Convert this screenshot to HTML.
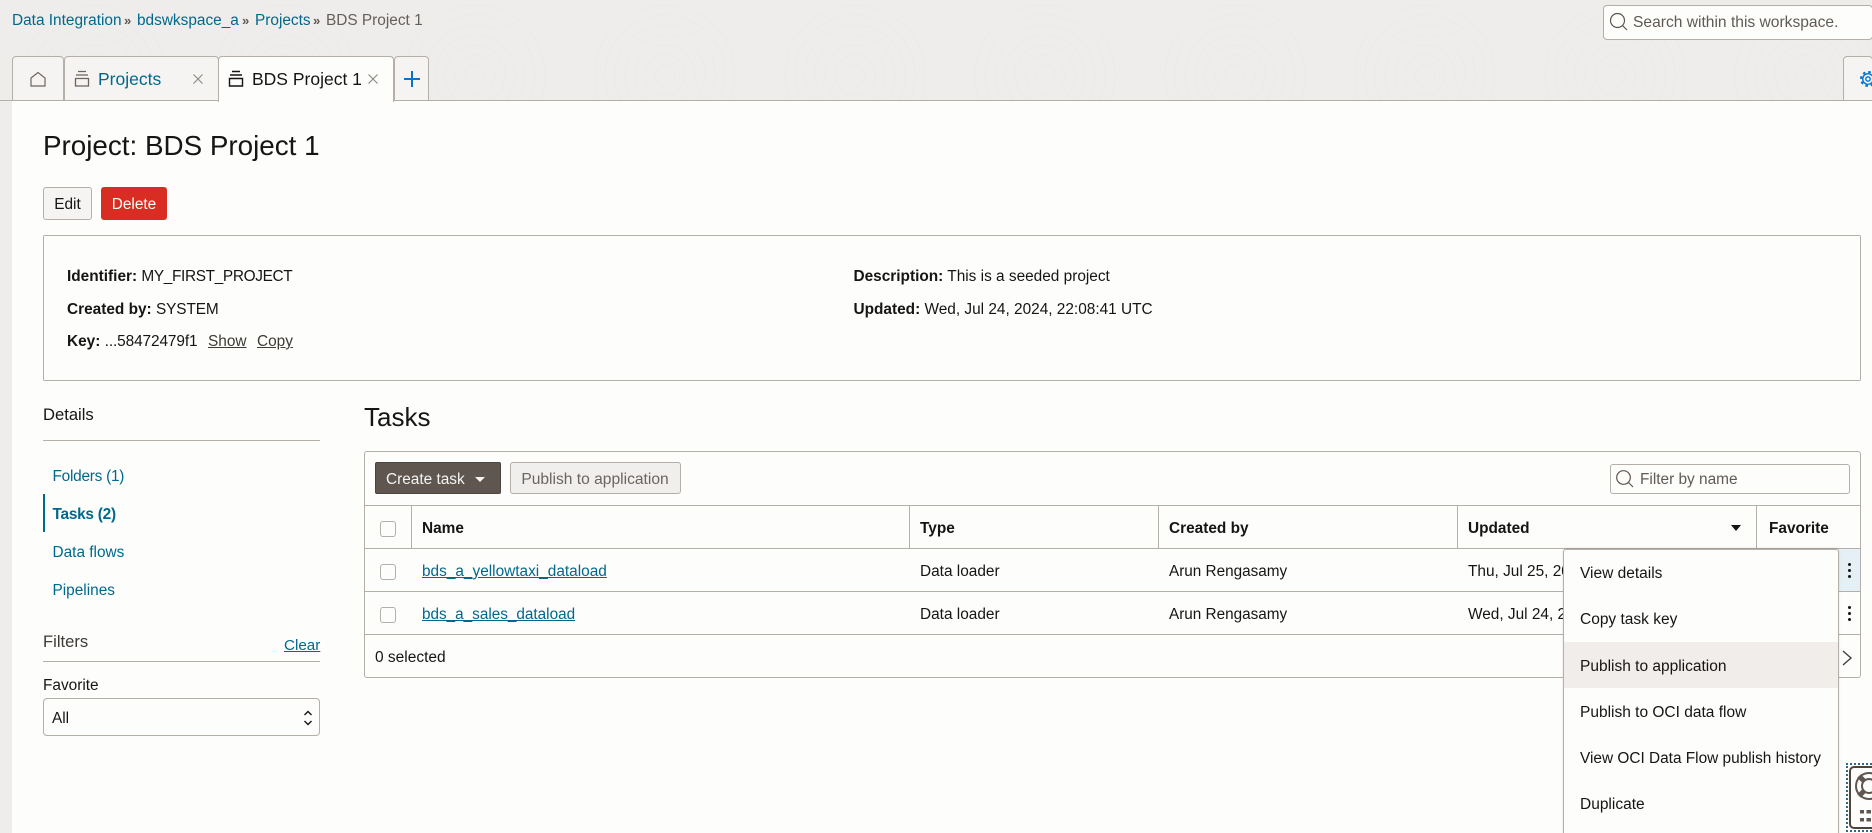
<!DOCTYPE html>
<html><head><meta charset="utf-8">
<style>
*{box-sizing:border-box}
html,body{margin:0;padding:0;width:1872px;height:833px;overflow:hidden;background:#eeedeb}
#p{position:relative;width:1872px;height:833px;overflow:hidden;background:#eeedeb;font-family:"Liberation Sans",Arial,sans-serif;font-size:15.4px;color:#161513}
.a{position:absolute;white-space:nowrap}
.t{position:absolute;white-space:nowrap;line-height:20px;height:20px;margin-top:1px}
.l{color:#00688c}
.b{font-weight:bold}
.box{position:absolute;border:1px solid #b5afa9}
.hl{position:absolute;background:#b5afa9}
.tab{position:absolute;top:56px;height:45px;background:#f5f4f2;border:1px solid #b5afa9;border-radius:4px 4px 0 0}
.cb{position:absolute;left:380px;width:16px;height:16px;border:1px solid #b5afa9;border-radius:3px;background:#fdfdfb}
.mi{position:absolute;left:1580px;line-height:20px;white-space:nowrap;color:#161513;margin-top:1px;font-size:15.5px}
.dot{position:absolute;width:3px;height:3px;border-radius:50%;background:#161513;left:1847.5px}
.sep{font-size:13px;font-weight:bold;color:#5f5650}
</style></head><body><div id="p">
<svg class="a" style="left:0;top:0" width="1872" height="833" fill="none">
<defs><pattern id="w" width="190" height="150" patternUnits="userSpaceOnUse">
<g stroke="#ebeae8" stroke-width="1"><circle cx="95" cy="75" r="10"/><circle cx="95" cy="75" r="20"/><circle cx="95" cy="75" r="30"/><circle cx="95" cy="75" r="40"/><circle cx="95" cy="75" r="50"/><circle cx="95" cy="75" r="60"/><circle cx="95" cy="75" r="70"/></g>
</pattern></defs>
<rect width="1872" height="833" fill="url(#w)"/></svg>

<div class="a" style="left:12px;top:101px;width:1860px;height:732px;background:#fdfdfb"></div>

<!-- breadcrumb -->
<div class="t l" style="left:12px;top:10px">Data Integration</div>
<div class="t sep" style="left:124px;top:10px">»</div>
<div class="t l" style="left:137px;top:10px">bdswkspace_a</div>
<div class="t sep" style="left:242px;top:10px">»</div>
<div class="t l" style="left:255px;top:10px">Projects</div>
<div class="t sep" style="left:313px;top:10px">»</div>
<div class="t" style="left:326px;top:10px;color:#655f5a">BDS Project 1</div>

<!-- search -->
<div class="a" style="left:1603px;top:5px;width:270px;height:35px;background:#fdfdfb;border:1px solid #b5afa9;border-radius:4px"></div>
<svg class="a" style="left:1609px;top:12px" width="20" height="20" fill="none" stroke="#5f5650" stroke-width="1.2"><circle cx="8.5" cy="8.5" r="7"/><path d="M13.5 13.5L18 18"/></svg>
<div class="t" style="left:1633px;top:12px;color:#5f5a55;font-size:15.6px">Search within this workspace.</div>

<!-- tabs -->
<div class="hl" style="left:0;top:100px;width:1872px;height:1px"></div>
<div class="tab" style="left:12px;width:52px"></div>
<svg class="a" style="left:29px;top:70px" width="18" height="18" fill="none" stroke="#6b6560" stroke-width="1.2"><path d="M2 8L9 2.5L16 8V16H2Z"/></svg>
<div class="tab" style="left:64px;width:155px"></div>
<svg class="a" style="left:73px;top:70px" width="18" height="18" fill="none" stroke="#6b6560" stroke-width="1.3"><path d="M5 1.5H13M3 5H15M2.5 8.5H15.5V16H2.5Z"/></svg>
<div class="t l" style="left:98px;top:68px;font-size:17.5px">Projects</div>
<svg class="a" style="left:192px;top:73px" width="12" height="12" stroke="#8c8680" stroke-width="1.1"><path d="M1.5 1.5L10.5 10.5M10.5 1.5L1.5 10.5"/></svg>
<div class="tab" style="left:218px;width:176px;height:46px;background:#fdfdfb;border-bottom:none;z-index:1"></div>
<svg class="a" style="left:227px;top:70px;z-index:2" width="18" height="18" fill="none" stroke="#161513" stroke-width="1.4"><path d="M5 1.5H13M3 5H15M2.5 8.5H15.5V16H2.5Z"/></svg>
<div class="t" style="left:252px;top:68px;font-size:17.5px;z-index:2">BDS Project 1</div>
<svg class="a" style="left:367px;top:73px;z-index:2" width="12" height="12" stroke="#8c8680" stroke-width="1.1"><path d="M1.5 1.5L10.5 10.5M10.5 1.5L1.5 10.5"/></svg>
<div class="tab" style="left:394px;width:35px"></div>
<svg class="a" style="left:403px;top:70px" width="18" height="18" stroke="#0572ce" stroke-width="2"><path d="M9 1V17M1 9H17"/></svg>
<div class="tab" style="left:1843px;width:30px"></div>
<svg class="a" style="left:1860px;top:71px" width="16" height="16" fill="none" stroke="#0572ce"><circle cx="8" cy="8" r="2.2" stroke-width="1.4"/><circle cx="8" cy="8" r="5.3" stroke-width="1.4"/><circle cx="8" cy="8" r="7" stroke-width="2" stroke-dasharray="2.6 2.9"/></svg>

<!-- heading -->
<div class="a" style="left:43px;top:129px;font-size:27.8px;line-height:34px">Project: BDS Project 1</div>
<div class="a" style="left:43px;top:187px;width:49px;height:33px;background:#f5f4f2;border:1px solid #b5afa9;border-radius:3px;text-align:center;line-height:33px">Edit</div>
<div class="a" style="left:101px;top:187px;width:66px;height:33px;background:#d92d24;border-radius:3px;text-align:center;line-height:35px;color:#fff">Delete</div>

<!-- info box -->
<div class="box" style="left:43px;top:235px;width:1818px;height:146px;border-radius:2px"></div>
<div class="t" style="left:67px;top:266px"><span class="b">Identifier:</span> <span style="letter-spacing:-.35px">MY_FIRST_PROJECT</span></div>
<div class="t" style="left:67px;top:299px"><span class="b">Created by:</span> <span style="letter-spacing:-.1px">SYSTEM</span></div>
<div class="t" style="left:67px;top:331px"><span class="b">Key:</span> <span style="letter-spacing:-.1px">...58472479f1</span></div>
<div class="t" style="left:208px;top:331px;color:#3e3a36;text-decoration:underline">Show</div>
<div class="t" style="left:257px;top:331px;color:#3e3a36;text-decoration:underline">Copy</div>
<div class="t" style="left:853.500px;top:266px"><span class="b">Description:</span> This is a seeded project</div>
<div class="t" style="left:853.500px;top:299px"><span class="b">Updated:</span> Wed, Jul 24, 2024, 22:08:41 UTC</div>

<!-- left nav -->
<div class="t" style="left:43px;top:404px;font-size:16.6px">Details</div>
<div class="hl" style="left:43px;top:440px;width:277px;height:1px"></div>
<div class="t l" style="left:52.500px;top:466px;letter-spacing:-.25px">Folders (1)</div>
<div class="a" style="left:43px;top:494px;width:2px;height:38px;background:#00688c"></div>
<div class="t l b" style="left:52.500px;top:504px;letter-spacing:-.25px">Tasks (2)</div>
<div class="t l" style="left:52.500px;top:542px">Data flows</div>
<div class="t l" style="left:52.500px;top:580px">Pipelines</div>
<div class="t" style="left:43px;top:631px;font-size:16.6px;color:#3e3a36">Filters</div>
<div class="t l" style="left:284px;top:635px;font-size:15.2px;text-decoration:underline">Clear</div>
<div class="hl" style="left:43px;top:661px;width:277px;height:1px"></div>
<div class="t" style="left:43px;top:675px">Favorite</div>
<div class="a" style="left:43px;top:698px;width:277px;height:38px;border:1px solid #b5afa9;border-radius:4px;background:#fdfdfb"></div>
<div class="t" style="left:52px;top:708px">All</div>
<svg class="a" style="left:303px;top:709px" width="10" height="18" fill="none" stroke="#161513" stroke-width="1.4"><path d="M1.5 6L5 2.5L8.5 6M1.5 12L5 15.5L8.5 12"/></svg>

<!-- Tasks -->
<div class="a" style="left:364px;top:401px;font-size:26px;line-height:32px">Tasks</div>
<div class="box" style="left:364px;top:451px;width:1497px;height:227px;border-radius:3px"></div>
<div class="a" style="left:375px;top:462px;width:126px;height:32px;background:#5f5650;border:1px solid #4b4540;border-radius:2px;color:#f5f4f2;line-height:33px;padding-left:10px">Create task</div>
<div class="a" style="left:475px;top:477px;width:0;height:0;border-left:5px solid transparent;border-right:5px solid transparent;border-top:5px solid #f5f4f2"></div>
<div class="a" style="left:510px;top:462px;width:171px;height:32px;background:#f1efed;border:1px solid #b5afa9;border-radius:3px;color:#6b6560;line-height:33px;text-align:center;font-size:15.6px;padding-right:1px">Publish to application</div>
<div class="a" style="left:1610px;top:464px;width:240px;height:30px;border:1px solid #b5afa9;border-radius:3px;background:#fdfdfb"></div>
<svg class="a" style="left:1615px;top:469px" width="20" height="20" fill="none" stroke="#5f5650" stroke-width="1.2"><circle cx="8.5" cy="8.5" r="6.8"/><path d="M13.5 13.5L18 18"/></svg>
<div class="t" style="left:1640px;top:469px;color:#5f5a55">Filter by name</div>

<div class="hl" style="left:364px;top:505px;width:1497px;height:1px"></div>
<div class="hl" style="left:364px;top:548px;width:1497px;height:1px"></div>
<div class="hl" style="left:364px;top:591px;width:1497px;height:1px"></div>
<div class="hl" style="left:364px;top:634px;width:1497px;height:1px"></div>
<div class="hl" style="left:411px;top:505px;width:1px;height:43px"></div>
<div class="hl" style="left:909px;top:505px;width:1px;height:43px"></div>
<div class="hl" style="left:1158px;top:505px;width:1px;height:43px"></div>
<div class="hl" style="left:1457px;top:505px;width:1px;height:43px"></div>
<div class="hl" style="left:1756px;top:505px;width:1px;height:43px"></div>
<div class="cb" style="top:521px"></div>
<div class="cb" style="top:564px"></div>
<div class="cb" style="top:607px"></div>
<div class="t b" style="left:422px;top:518px">Name</div>
<div class="t b" style="left:920px;top:518px">Type</div>
<div class="t b" style="left:1169px;top:518px">Created by</div>
<div class="t b" style="left:1468px;top:518px">Updated</div>
<div class="t b" style="left:1769px;top:518px">Favorite</div>
<div class="a" style="left:1731px;top:525px;width:0;height:0;border-left:5px solid transparent;border-right:5px solid transparent;border-top:6px solid #161513"></div>

<div class="t l" style="left:422px;top:561px;text-decoration:underline">bds_a_yellowtaxi_dataload</div>
<div class="t" style="left:920px;top:561px">Data loader</div>
<div class="t" style="left:1169px;top:561px;font-size:15.3px">Arun Rengasamy</div>
<div class="t" style="left:1468px;top:561px">Thu, Jul 25, 2024</div>
<div class="t l" style="left:422px;top:604px;font-size:15.3px;text-decoration:underline">bds_a_sales_dataload</div>
<div class="t" style="left:920px;top:604px">Data loader</div>
<div class="t" style="left:1169px;top:604px;font-size:15.3px">Arun Rengasamy</div>
<div class="t" style="left:1468px;top:604px">Wed, Jul 24, 2024</div>
<div class="t" style="left:375px;top:647px;font-size:15.5px">0 selected</div>

<div class="a" style="left:1838px;top:549px;width:22px;height:42px;background:#e4f0f5"></div>
<div class="dot" style="top:563px"></div><div class="dot" style="top:569px"></div><div class="dot" style="top:575px"></div>
<div class="dot" style="top:606px"></div><div class="dot" style="top:612px"></div><div class="dot" style="top:618px"></div>
<svg class="a" style="left:1841px;top:649px" width="12" height="18" fill="none" stroke="#3e3a36" stroke-width="1.3"><path d="M2 2L10 9L2 16"/></svg>

<!-- menu -->
<div class="a" style="left:1563px;top:549px;width:276px;height:300px;background:#fdfdfb;border:1px solid #b5afa9;border-radius:3px;box-shadow:0 -1px 2px rgba(0,0,0,.12)"></div>
<div class="a" style="left:1564px;top:642px;width:274px;height:46px;background:#f0edeb"></div>
<div class="mi" style="top:563px">View details</div>
<div class="mi" style="top:609px">Copy task key</div>
<div class="mi" style="top:656px">Publish to application</div>
<div class="mi" style="top:702px">Publish to OCI data flow</div>
<div class="mi" style="top:748px;font-size:15.4px">View OCI Data Flow publish history</div>
<div class="mi" style="top:794px">Duplicate</div>

<!-- help widget -->
<div class="a" style="left:1846px;top:763px;width:30px;height:69px;border:2px dotted #2d6a85"></div>
<div class="a" style="left:1849px;top:766px;width:30px;height:63px;border:2px solid #4b4540;border-radius:5px;background:#fdfdfb"></div>
<svg class="a" style="left:1854px;top:771px" width="18" height="56" fill="none" stroke="#5f5650">
<circle cx="15" cy="15" r="13" stroke-width="2"/><circle cx="15" cy="15" r="7" stroke-width="2"/><path d="M5 5L10 10M5 25L10 20" stroke-width="5"/>
<path d="M6 39h4v3.500H6zM12.500 39h4.500v3.500H12.500zM6 47h4v3.500H6zM12.500 47h4.500v3.500H12.500z" fill="#5f5650" stroke="none"/></svg>
</div></body></html>
